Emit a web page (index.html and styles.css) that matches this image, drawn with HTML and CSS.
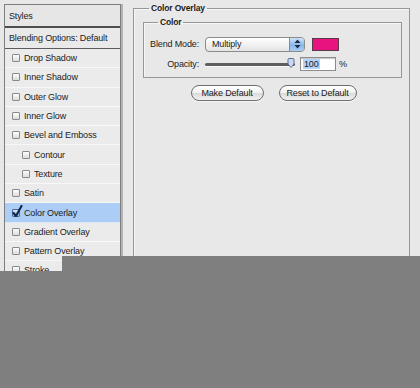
FILE: index.html
```html
<!DOCTYPE html>
<html lang="en">
<head>
  <meta charset="UTF-8">
  <title>Layer Style</title>
  <link rel="stylesheet" href="styles.css">
</head>
<body>
  <div class="window">
    <!-- Styles list -->
    <aside class="styles-panel">
      <div class="panel-head">Styles</div>
      <div class="blend-row">Blending Options: Default</div>
      <ul class="effect-list">
        <li class="effect"><span class="check"></span>Drop Shadow</li>
        <li class="effect"><span class="check"></span>Inner Shadow</li>
        <li class="effect"><span class="check"></span>Outer Glow</li>
        <li class="effect"><span class="check"></span>Inner Glow</li>
        <li class="effect"><span class="check"></span>Bevel and Emboss</li>
        <li class="effect sub"><span class="check"></span>Contour</li>
        <li class="effect sub"><span class="check"></span>Texture</li>
        <li class="effect"><span class="check"></span>Satin</li>
        <li class="effect selected">
          <span class="check on">
            <svg width="11" height="13" viewBox="0 0 11 13"><path d="M1.5 8 L4 11 L9.5 1" fill="none" stroke="#10214a" stroke-width="2" stroke-linecap="round" stroke-linejoin="round"/></svg>
          </span>Color Overlay
        </li>
        <li class="effect"><span class="check"></span>Gradient Overlay</li>
        <li class="effect"><span class="check"></span>Pattern Overlay</li>
        <li class="effect"><span class="check"></span>Stroke</li>
      </ul>
    </aside>

    <!-- Settings -->
    <main class="settings">
      <fieldset class="group">
        <legend>Color Overlay</legend>
        <fieldset class="group inner">
          <legend>Color</legend>
          <div class="field-row">
            <label class="field-label">Blend Mode:</label>
            <div class="popup">
              <span class="popup-text">Multiply</span>
              <span class="popup-arrows">
                <svg width="7" height="10" viewBox="0 0 7 10"><path d="M3.5 0.5 L6.5 4 H0.5 Z M3.5 9.5 L6.5 6 H0.5 Z" fill="#1d2a44"/></svg>
              </span>
            </div>
            <span class="swatch"></span>
          </div>
          <div class="field-row">
            <label class="field-label">Opacity:</label>
            <div class="slider">
              <span class="thumb">
                <svg width="8" height="10" viewBox="0 0 8 10"><path d="M1 1.5 Q1 0.5 2 0.5 H6 Q7 0.5 7 1.5 V6 L4 9.5 L1 6 Z" fill="#c9daf0" stroke="#56708f" stroke-width="1"/></svg>
              </span>
            </div>
            <span class="num-box"><span class="num-sel">100</span></span>
            <span class="unit">%</span>
          </div>
        </fieldset>
        <div class="buttons">
          <button class="btn make">Make Default</button>
          <button class="btn reset">Reset to Default</button>
        </div>
      </fieldset>
    </main>

    <div class="shade"></div>
  </div>
</body>
</html>
```

FILE: styles.css
```css
/* Base */
* {
  margin: 0;
  padding: 0;
  box-sizing: border-box;
}

body {
  font-family: "Liberation Sans", Arial, sans-serif;
  font-size: 9px;
  letter-spacing: -0.15px;
  color: #1b1b1b;
  background: #e8e8e8;
  overflow: hidden;
}

.window {
  display: flex;
  align-items: flex-start;
  width: 420px;
  height: 388px;
  background: #e8e8e8;
  position: relative;
  overflow: hidden;
}

/* Styles list */
.styles-panel {
  width: 117px;
  height: 320px;
  margin: 4px 0 0 4px;
  border: 1px solid #7d7d7d;
  background: #ebebeb;
  box-shadow: 2px 0 0 #b4b4b4;
}

.panel-head {
  height: 23px;
  line-height: 22px;
  padding-left: 4px;
  background: #e6e6e6;
  border-bottom: 2px solid #4e4e4e;
}

.blend-row {
  height: 21px;
  line-height: 20px;
  padding-left: 4px;
  background: #e9e9e9;
  border-bottom: 1px solid #5c5c5c;
}

.effect-list {
  list-style: none;
}

.effect {
  display: flex;
  align-items: center;
  height: 19.3px;
  padding-left: 7px;
  border-bottom: 1px solid #f8f8f8;
  background: #ebebeb;
}

.effect.sub {
  padding-left: 17px;
}

.effect.selected {
  background: #abcdf6;
  border-bottom-color: #dfeaf7;
}

.check {
  position: relative;
  width: 8px;
  height: 8px;
  margin-right: 4px;
  border: 1px solid #8a8a8a;
  border-radius: 1px;
  background: linear-gradient(#fdfdfd, #dcdcdc);
}

.check.on {
  border-color: #4a6a98;
  background: linear-gradient(#d6e6fa, #8fb5e6);
}

.check.on svg {
  position: absolute;
  left: -1px;
  top: -5px;
}

/* Settings */
.settings {
  margin: 3px 0 0 12px;
}

.group {
  border: 1px solid #979797;
  box-shadow: inset 1px 1px 0 #f6f6f6;
  min-inline-size: 0;
}

.settings > .group {
  width: 277px;
  height: 320px;
  padding: 3px 7px 0 9px;
}

.group legend {
  font-weight: bold;
  font-size: 8.5px;
  line-height: 11px;
  padding: 0 2px;
  margin-left: 6px;
}

.group.inner {
  width: 259px;
  height: 61px;
  padding: 8px 0 0 0;
}

.group.inner legend {
  margin-left: 14px;
}

.field-row {
  display: flex;
  align-items: center;
  height: 16px;
  margin-bottom: 4px;
}

.field-label {
  width: 55px;
  text-align: right;
  margin-right: 6px;
}

.popup {
  display: flex;
  align-items: stretch;
  width: 100px;
  height: 15px;
  border: 1px solid #8b8b8b;
  border-radius: 4px;
  background: linear-gradient(#ffffff, #e4e4e4);
  overflow: hidden;
}

.popup-text {
  flex: 1;
  line-height: 13px;
  padding-left: 6px;
}

.popup-arrows {
  display: flex;
  align-items: center;
  justify-content: center;
  width: 15px;
  border-left: 1px solid #6f8fb8;
  background: linear-gradient(#cfe3fb, #8ab7ea 55%, #a8cdf5);
}

.swatch {
  width: 27px;
  height: 13px;
  margin-left: 7px;
  background: #e9137f;
  border: 1px solid #5a3a48;
}

.slider {
  position: relative;
  width: 90px;
  height: 3px;
  border-radius: 2px;
  background: #5e5e5e;
  box-shadow: 0 1px 0 #fafafa;
}

.thumb {
  position: absolute;
  right: 0;
  top: -5px;
  line-height: 0;
}

.num-box {
  width: 36px;
  height: 14px;
  margin-left: 5px;
  padding-left: 2px;
  line-height: 12px;
  background: #ffffff;
  border: 1px solid #8c8c8c;
  box-shadow: inset 0 1px 1px #c4c4c4;
}

.num-sel {
  background: #b3d3fb;
  padding: 0 1px;
}

.unit {
  margin-left: 3px;
}

.buttons {
  display: flex;
  justify-content: center;
  gap: 15px;
  margin-top: 7px;
  padding-left: 2px;
}

.btn {
  height: 16px;
  font-family: inherit;
  font-size: 9px;
  letter-spacing: -0.15px;
  color: #1b1b1b;
  border: 1px solid #6d6d6d;
  border-radius: 8px;
  background: linear-gradient(#ffffff, #f1f1f1 50%, #dadada 51%, #f2f2f2);
  box-shadow: 0 1px 0 #f8f8f8;
}

.btn.make {
  width: 73px;
}

.btn.reset {
  width: 78px;
}

/* Grey capture area covering the lower part */
.shade {
  position: absolute;
  left: 0;
  right: 0;
  top: 256px;
  bottom: 0;
  background: #7f7f7f;
  clip-path: polygon(62px 0, 100% 0, 100% 100%, 0 100%, 0 15px, 62px 15px);
}
```
